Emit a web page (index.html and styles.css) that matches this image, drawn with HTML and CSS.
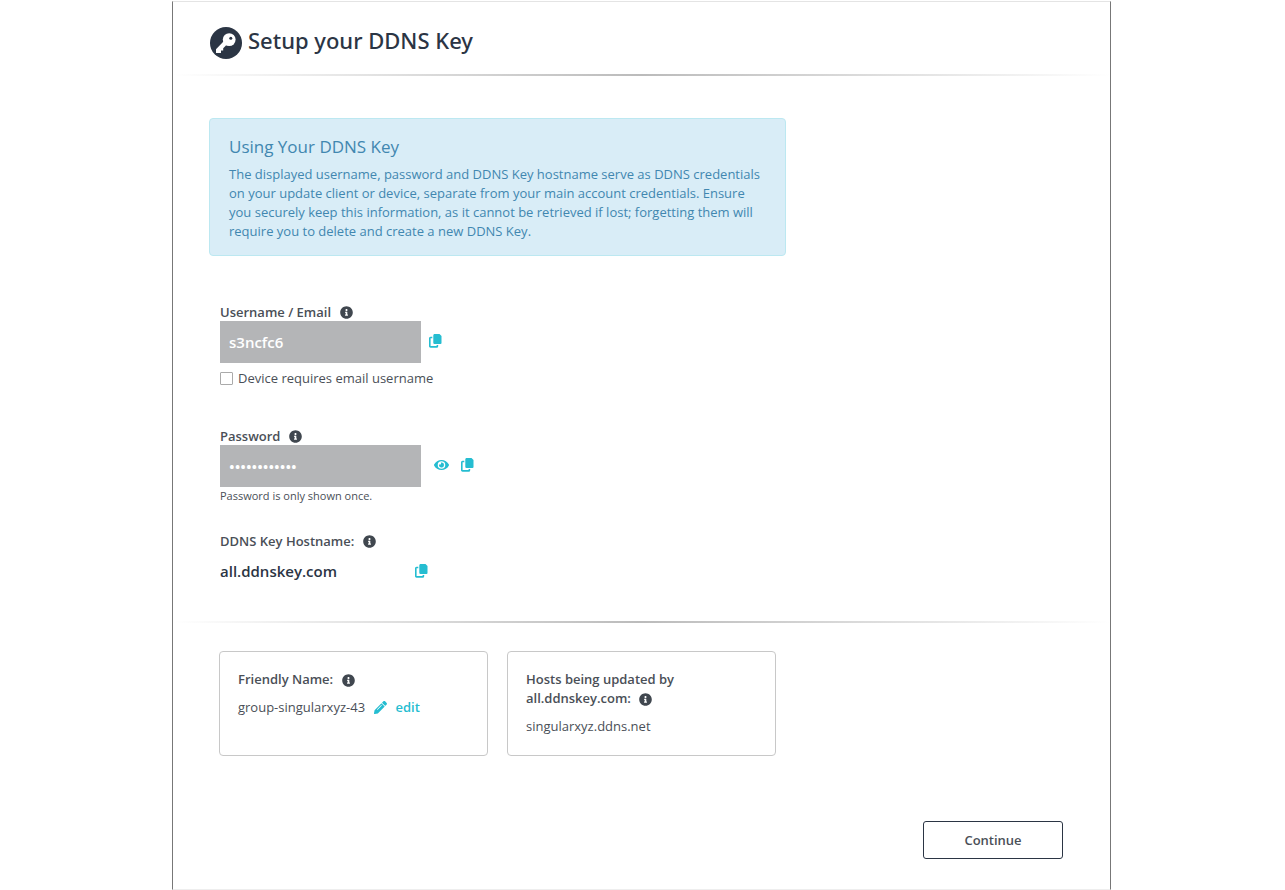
FILE: index.html
```html
<!DOCTYPE html>
<html lang="en">
<head>
    <meta charset="UTF-8">
    <meta name="viewport" content="width=device-width, initial-scale=1.0">
    <title>Setup your DDNS Key</title>
    <link rel="stylesheet" href="styles.css">
</head>
<body>
    <!-- Shared icons -->
    <svg class="sprite" aria-hidden="true">
        <symbol id="info" viewBox="0 0 512 512">
            <path d="M256 8C119 8 8 119 8 256s111 248 248 248 248-111 248-248S393 8 256 8zm0 110c23.200 0 42 18.800 42 42s-18.800 42-42 42-42-18.800-42-42 18.800-42 42-42zm56 254c0 6.600-5.400 12-12 12h-88c-6.600 0-12-5.400-12-12v-24c0-6.600 5.400-12 12-12h12v-64h-12c-6.600 0-12-5.400-12-12v-24c0-6.600 5.400-12 12-12h64c6.600 0 12 5.400 12 12v100h12c6.600 0 12 5.400 12 12v24z"/>
        </symbol>
        <symbol id="copy" viewBox="0 0 13 14">
            <path d="M6 0h4.500L12.500 2v7a1 1 0 0 1-1 1H5.500a1.200 1.200 0 0 1-1.200-1.200V1.500A1.500 1.500 0 0 1 6 0z"/>
            <path d="M3.300 3.500H1.500a.7.7 0 0 0-.7.7v8a.7.7 0 0 0 .7.700h6.200a.7.7 0 0 0 .7-.7V11" fill="none" stroke="currentColor" stroke-width="1.600"/>
        </symbol>
        <symbol id="eye" viewBox="0 0 576 512">
            <path d="M572.520 241.400C518.290 135.590 410.930 64 288 64S57.680 135.640 3.480 241.410a32.350 32.350 0 0 0 0 29.190C57.710 376.410 165.070 448 288 448s230.320-71.640 284.520-177.410a32.350 32.350 0 0 0 0-29.190zM288 400a144 144 0 1 1 144-144 143.930 143.930 0 0 1-144 144zm0-240a95.310 95.310 0 0 0-25.310 3.790 47.850 47.850 0 0 1-66.900 66.900A95.780 95.780 0 1 0 288 160z"/>
        </symbol>
        <symbol id="pencil" viewBox="0 0 512 512">
            <path d="M497.900 142.100l-46.100 46.100c-4.700 4.700-12.300 4.700-17 0l-111-111c-4.700-4.700-4.700-12.300 0-17l46.100-46.100c18.700-18.700 49.100-18.700 67.900 0l60.100 60.100c18.800 18.700 18.800 49.100 0 67.900zM284.200 99.800L21.600 362.400.400 483.900c-2.900 16.400 11.400 30.600 27.800 27.800l121.500-21.300 262.600-262.600c4.700-4.700 4.700-12.300 0-17l-111-111c-4.800-4.700-12.400-4.700-17.100 0zM124.100 339.900c-5.500-5.500-5.500-14.300 0-19.800l154-154c5.500-5.500 14.300-5.500 19.800 0s5.500 14.300 0 19.800l-154 154c-5.500 5.500-14.300 5.500-19.800 0z"/>
        </symbol>
    </svg>

    <main class="panel">
        <header class="panel-header">
            <svg class="key-icon" viewBox="0 0 32 32" aria-hidden="true">
                <circle cx="16" cy="16" r="16" fill="#2b3544"/>
                <path d="M14.200 13.800L6 22.300V26h5v-2.600h2.200v-2.200l2.800-2.700z" fill="#fff"/>
                <circle cx="19.200" cy="12.600" r="6.400" fill="#fff"/>
                <circle cx="20.800" cy="11.200" r="1.500" fill="#2b3544"/>
            </svg>
            <h1>Setup your DDNS Key</h1>
        </header>
        <hr class="divider">

        <section class="alert">
            <h2>Using Your DDNS Key</h2>
            <p>The displayed username, password and DDNS Key hostname serve as DDNS credentials on your update client or device, separate from your main account credentials. Ensure you securely keep this information, as it cannot be retrieved if lost; forgetting them will require you to delete and create a new DDNS Key.</p>
        </section>

        <form class="credentials" id="ddnsForm">
            <div class="field username">
                <div class="label-row">
                    <label for="username">Username / Email</label>
                    <svg class="info"><use href="#info"/></svg>
                </div>
                <div class="input-row">
                    <input type="text" id="username" value="s3ncfc6" readonly>
                    <button type="button" class="icon-btn" aria-label="Copy username"><svg class="copy"><use href="#copy"/></svg></button>
                </div>
                <div class="check-row">
                    <input type="checkbox" id="emailUsername">
                    <label for="emailUsername">Device requires email username</label>
                </div>
            </div>

            <div class="field password">
                <div class="label-row">
                    <label for="password">Password</label>
                    <svg class="info"><use href="#info"/></svg>
                </div>
                <div class="input-row">
                    <input type="password" id="password" value="abcdefghijkl" readonly>
                    <div class="actions">
                        <button type="button" class="icon-btn" aria-label="Show password"><svg class="eye"><use href="#eye"/></svg></button>
                        <button type="button" class="icon-btn" aria-label="Copy password"><svg class="copy"><use href="#copy"/></svg></button>
                    </div>
                </div>
                <small>Password is only shown once.</small>
            </div>

            <div class="field">
                <div class="label-row">
                    <span>DDNS Key Hostname:</span>
                    <svg class="info"><use href="#info"/></svg>
                </div>
                <div class="hostname">
                    <span>all.ddnskey.com</span>
                    <button type="button" class="icon-btn" aria-label="Copy hostname"><svg class="copy"><use href="#copy"/></svg></button>
                </div>
            </div>
        </form>
        <hr class="divider">

        <section class="cards">
            <div class="card">
                <h3>Friendly Name: <svg class="info"><use href="#info"/></svg></h3>
                <p>group-singularxyz-43 <a href="#"><svg class="pencil"><use href="#pencil"/></svg>edit</a></p>
            </div>
            <div class="card">
                <h3>Hosts being updated by all.ddnskey.com: <svg class="info"><use href="#info"/></svg></h3>
                <p>singularxyz.ddns.net</p>
            </div>
        </section>

        <footer class="panel-footer">
            <button type="submit" form="ddnsForm" class="continue">Continue</button>
        </footer>
    </main>
</body>
</html>
```
FILE: styles.css
```css
* {
    box-sizing: border-box;
}
body {
    margin: 0;
    padding: 1px 174px 0 172px;
    background-color: #fff;
    color: #4a4f57;
    font-family: "Open Sans", sans-serif;
    font-size: 13px;
    line-height: 19px;
}
h1, h2, h3, p {
    margin: 0;
}
svg {
    fill: currentColor;
}
.sprite {
    display: none;
}
.panel {
    border: 1px solid #777;
    border-top-color: #e4e4e4;
    border-bottom-color: #eee;
}
.panel-header {
    display: flex;
    gap: 6px;
    height: 72px;
    padding: 25px 37px 0;
}
.key-icon {
    width: 32px;
    height: 32px;
}
h1 {
    color: #2b3544;
    font-family: "Noto Sans", "Open Sans", sans-serif;
    font-size: 22px;
    font-weight: 500;
    line-height: 26px;
}
.divider {
    height: 2px;
    margin: 0;
    border: none;
    background: linear-gradient(to right, transparent, #bbb 50%, transparent);
}

/* Blue info box */
.alert {
    max-width: 577px;
    margin: 42px 36px 0;
    padding: 17px 19px 14px;
    border: 1px solid #bce8f1;
    border-radius: 4px;
    background-color: #d9edf7;
    color: #4187b0;
}
.alert h2 {
    margin-bottom: 7px;
    font-size: 17px;
    font-weight: 500;
    line-height: 22px;
}

/* Key details */
.credentials {
    padding: 47px 47px 40px;
}
.label-row {
    display: flex;
    align-items: center;
    gap: 9px;
    font-weight: 600;
    line-height: 18px;
}
.info {
    width: 13px;
    height: 13px;
    color: #40474f;
}
.input-row {
    display: flex;
    align-items: center;
    gap: 8px;
}
.input-row input {
    width: 201px;
    height: 42px;
    padding: 0 9px;
    border: none;
    outline: none;
    background-color: #b4b5b7;
    color: #fff;
    font-family: inherit;
    font-size: 15px;
    font-weight: 600;
}
.actions {
    display: flex;
    align-items: center;
    gap: 12px;
    padding-left: 5px;
}
.icon-btn {
    display: flex;
    padding: 0 0 2px;
    border: none;
    background: none;
    color: #25bdd1;
    cursor: pointer;
}
.copy {
    width: 13px;
    height: 14px;
}
.eye {
    width: 15px;
    height: 14px;
}
.check-row {
    display: flex;
    align-items: center;
    gap: 5px;
    margin-top: 6px;
}
.check-row input {
    width: 13px;
    height: 13px;
    margin: 0;
    appearance: none;
    border: 1px solid #aaa;
    border-radius: 1px;
    background-color: #fff;
}
.check-row input:checked {
    background-color: #25bdd1;
}
.username {
    margin-bottom: 39px;
}
.password {
    margin-bottom: 28px;
}
.field small {
    display: block;
    font-size: 11px;
    line-height: 17px;
}
.hostname {
    display: flex;
    align-items: center;
    justify-content: space-between;
    width: 208px;
    margin-top: 12px;
    color: #2b3544;
    font-size: 15px;
    font-weight: 600;
    line-height: 19px;
}

/* Bottom cards */
.cards {
    display: flex;
    gap: 19px;
    padding: 28px 46px 0;
}
.card {
    width: 269px;
    min-height: 105px;
    padding: 18px 18px 10px;
    border: 1px solid #c8c8c8;
    border-radius: 4px;
}
.card h3 {
    max-width: 170px;
    margin-bottom: 9px;
    font-size: 13px;
    font-weight: 600;
}
.card .info {
    margin-left: 5px;
    vertical-align: -3px;
}
.card a {
    margin-left: 6px;
    color: #25bdd1;
    font-weight: 600;
    text-decoration: none;
}
.pencil {
    width: 13px;
    height: 13px;
    margin-right: 8px;
    vertical-align: -2px;
}
.panel-footer {
    display: flex;
    justify-content: flex-end;
    padding: 65px 47px 30px;
}
.continue {
    width: 140px;
    height: 38px;
    border: 1px solid #2b3544;
    border-radius: 3px;
    background-color: #fff;
    color: #4a4f57;
    font-family: inherit;
    font-size: 13px;
    font-weight: 600;
    cursor: pointer;
}
```
